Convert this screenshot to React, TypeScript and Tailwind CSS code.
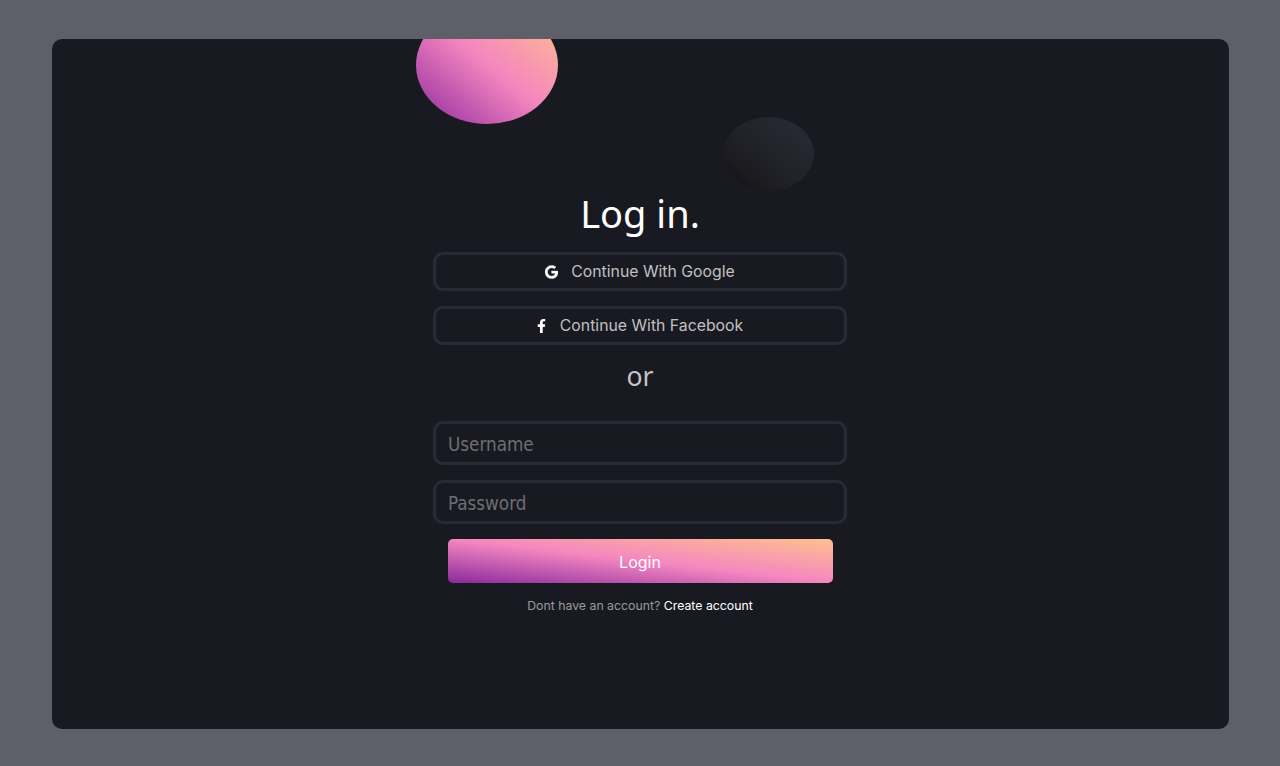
import React from "react";

function GoogleIcon() {
  return (
    <svg viewBox="0 0 488 512" className="w-[13px] h-[14px]" fill="#fff" stroke="#fff" strokeWidth="14">
      <path d="M488 261.8C488 403.3 391.1 504 248 504 110.8 504 0 393.2 0 256S110.8 8 248 8c66.8 0 123 24.5 166.3 64.9l-67.5 64.9C258.5 52.6 94.3 116.6 94.3 256c0 86.5 69.1 156.6 153.7 156.6 98.2 0 135-70.4 140.8-106.9H248v-85.3h236.1c2.3 12.7 3.9 24.9 3.9 41.4z" />
    </svg>
  );
}

function FacebookIcon() {
  return (
    <svg viewBox="0 0 320 512" className="w-[9px] h-[14px]" fill="#fff">
      <path d="M279.14 288l14.22-92.66h-88.91v-60.13c0-25.35 12.42-50.06 52.24-50.06h40.42V6.26S260.43 0 225.36 0c-73.22 0-121.08 44.38-121.08 124.72v70.62H22.89V288h81.39v224h100.17V288z" />
    </svg>
  );
}

const ui = "font-['Inter','Liberation_Sans',sans-serif]";
const body = "font-['Noto_Sans','Liberation_Sans',sans-serif]";
const field = "font-['DejaVu_Sans_Condensed','DejaVu_Sans','Liberation_Sans',sans-serif]";

export default function App() {
  return (
    <div className="min-h-[766px] bg-[#5e5f69] pt-[39px] pb-[37px] px-[51.5px]">
      <div className="relative h-[690px] overflow-hidden rounded-[10px] bg-[#191a21] pt-[153px]">
        <div className="absolute left-[364.5px] top-[-33px] h-[118px] w-[142px] rounded-[50%] bg-[linear-gradient(to_top_right,#8e2a9e,#f485bf,#ffc18e)]" />
        <div className="absolute left-[671.5px] top-[78px] h-[74px] w-[91px] rounded-[50%] bg-[linear-gradient(to_top_right,#131315,#22222a,#2a2b35)]" />

        <div className="relative mx-auto flex w-[414px] flex-col items-center">
          <h1 className={`${body} h-[44px] text-[38px] leading-[42px] font-normal text-white`}>Log in.</h1>

          <button className={`${ui} mt-[16px] flex h-[39px] w-full items-center justify-center gap-[13px] rounded-[10px] border-[3px] border-[#292a35] text-[15.8px] text-[#c0c0c4]`}>
            <GoogleIcon />
            <span>Continue With Google</span>
          </button>
          <button className={`${ui} mt-[15px] flex h-[39px] w-full items-center justify-center gap-[14px] rounded-[10px] border-[3px] border-[#292a35] text-[15.8px] text-[#c0c0c4]`}>
            <FacebookIcon />
            <span>Continue With Facebook</span>
          </button>

          <div className={`${body} mt-[14px] h-[34px] text-[26.5px] leading-[34px] text-[#c4c4c8]`}>or</div>

          <input
            placeholder="Username"
            className={`${field} mt-[28px] h-[44px] w-full rounded-[10px] border-[3px] border-[#292a35] bg-transparent px-[12px] pt-[2px] text-[18.7px] outline-none placeholder:text-[#6d6e73]`}
          />
          <input
            placeholder="Password"
            className={`${field} mt-[15px] h-[44px] w-full rounded-[10px] border-[3px] border-[#292a35] bg-transparent px-[12px] pt-[2px] text-[18.7px] outline-none placeholder:text-[#6d6e73]`}
          />

          <button className={`${ui} mt-[15px] h-[44px] w-[385px] rounded-[5px] bg-[linear-gradient(to_top_right,#8b299c,#f487c0,#ffc08f)] pt-[2px] text-[16px] text-white`}>
            Login
          </button>

          <p className={`${ui} mt-[14px] text-[12.3px] leading-[18px] text-[#9a9a9f]`}>
            Dont have an account? <a className="text-white">Create account</a>
          </p>
        </div>
      </div>
    </div>
  );
}
